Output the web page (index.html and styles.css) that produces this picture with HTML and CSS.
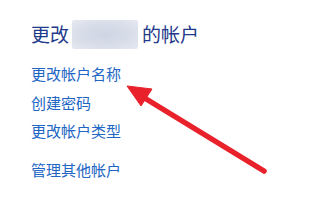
FILE: index.html
```html
<!DOCTYPE html>
<html lang="zh-CN">
<head>
<meta charset="utf-8">
<link rel="stylesheet" href="styles.css">
</head>
<body>
<div class="page">
  <h1 class="title">更改<span class="blur"></span>的帐户</h1>
  <ul class="links">
    <li><a href="#">更改帐户名称</a></li>
    <li><a href="#">创建密码</a></li>
    <li><a href="#">更改帐户类型</a></li>
    <li class="sep"><a href="#">管理其他帐户</a></li>
  </ul>
  <svg class="arrow" width="316" height="206" viewBox="0 0 316 206">
    <line x1="264" y1="171" x2="138" y2="94" stroke="#e8212b" stroke-width="5.5" stroke-linecap="round"/>
    <polygon points="127,86 152,89 141,106" fill="#e8212b" stroke="#e8212b" stroke-width="1" stroke-linejoin="round"/>
  </svg>
</div>
</body>
</html>
```
FILE: styles.css
```css
html, body {
  margin: 0;
  padding: 0;
  background: #ffffff;
}
.page {
  position: relative;
  width: 316px;
  height: 206px;
  padding: 20px 0 0 31px;
  box-sizing: border-box;
  font-family: "Noto Sans CJK SC", "Microsoft YaHei", sans-serif;
}
.title {
  margin: 0;
  font-size: 19px;
  font-weight: normal;
  line-height: 28px;
  height: 28px;
  color: #1f3a8a;
  display: flex;
  align-items: center;
}
.blur {
  display: inline-block;
  width: 66px;
  height: 29px;
  margin: 0 4px 0 3px;
  background: radial-gradient(ellipse at center, #cfd5e4 0%, #d8dde9 55%, #e6e9f0 100%);
  border-radius: 2px;
}
.links {
  list-style: none;
  margin: 12px 0 0;
  padding: 0;
}
.links li {
  font-size: 15px;
  line-height: 28.5px;
}
.links li.sep {
  margin-top: 10px;
}
.links a {
  color: #2166c4;
  text-decoration: none;
}
.arrow {
  position: absolute;
  left: 0;
  top: 0;
  pointer-events: none;
}
```
